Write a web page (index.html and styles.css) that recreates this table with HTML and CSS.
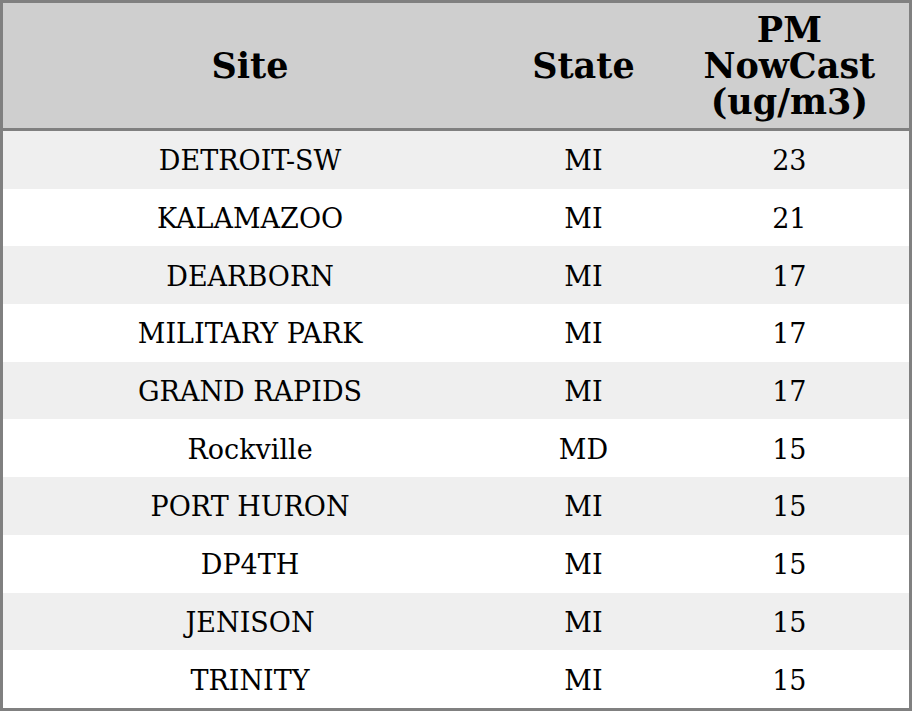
FILE: index.html
```html
<!DOCTYPE html>
<html>
<head>
<meta charset="utf-8">
<link rel="stylesheet" href="styles.css">
</head>
<body>
<table class="aq">
<colgroup><col class="c-site"><col class="c-state"><col class="c-pm"></colgroup>
<thead>
<tr><th>Site</th><th>State</th><th>PM NowCast (ug/m3)</th></tr>
</thead>
<tbody>
<tr><td>DETROIT-SW</td><td>MI</td><td>23</td></tr>
<tr><td>KALAMAZOO</td><td>MI</td><td>21</td></tr>
<tr><td>DEARBORN</td><td>MI</td><td>17</td></tr>
<tr><td>MILITARY PARK</td><td>MI</td><td>17</td></tr>
<tr><td>GRAND RAPIDS</td><td>MI</td><td>17</td></tr>
<tr><td>Rockville</td><td>MD</td><td>15</td></tr>
<tr><td>PORT HURON</td><td>MI</td><td>15</td></tr>
<tr><td>DP4TH</td><td>MI</td><td>15</td></tr>
<tr><td>JENISON</td><td>MI</td><td>15</td></tr>
<tr><td>TRINITY</td><td>MI</td><td>15</td></tr>
</tbody>
</table>
</body>
</html>
```
FILE: styles.css
```css
html, body { margin: 0; padding: 0; background: #fff; }
.aq {
  width: 912px;
  height: 711px;
  border-collapse: collapse;
  table-layout: fixed;
  border: 3px solid #808080;
  font-family: "DejaVu Serif", serif;
  color: #000;
}
.c-site { width: 494px; }
.c-state { width: 172px; }
.c-pm { width: 240px; }
.aq th {
  background: #cfcfcf;
  font-size: 35px;
  font-weight: bold;
  line-height: 36px;
  padding: 6px 8px;
  height: 113px;
  border-bottom: 3px solid #808080;
  text-align: center;
}
.aq td {
  font-size: 27px;
  text-align: center;
  padding: 2px 4px 0;
  height: 55px;
}
.aq tbody tr:nth-child(odd) td { background: #efefef; }
```
